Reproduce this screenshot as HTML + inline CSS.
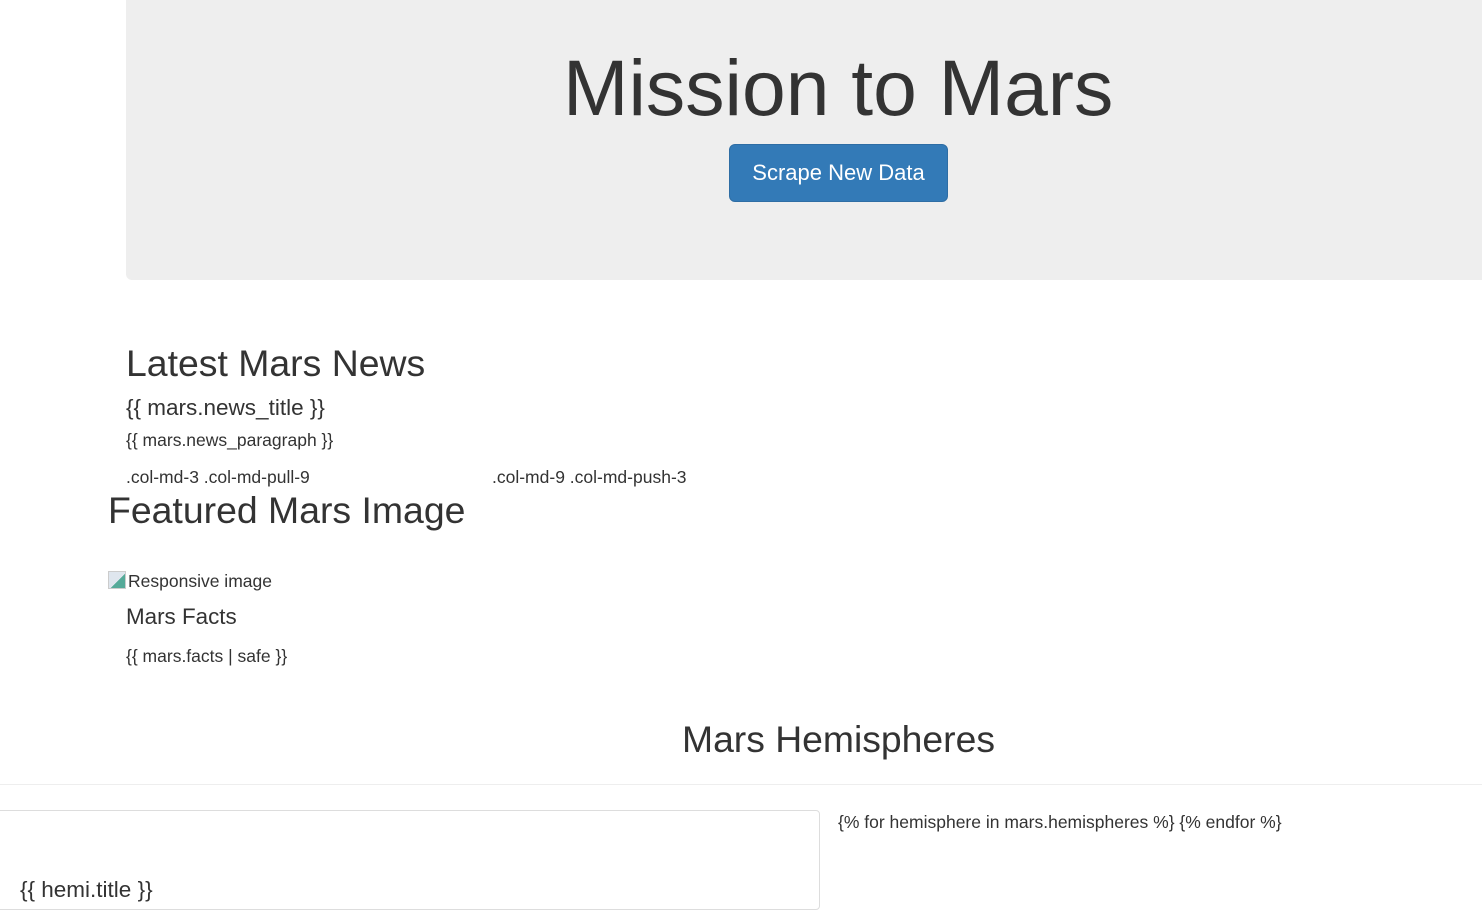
<!DOCTYPE html>
<html><head><style>
body{margin:0;width:1482px;height:886px;overflow:hidden;background:#fff;font-family:"Liberation Sans",sans-serif;color:#333;position:relative}
.a{position:absolute;white-space:nowrap}
</style></head><body>
<div class="a" style="left:126px;top:0;width:1356px;height:280px;background:#eee;border-bottom-left-radius:6px"></div>
<div class="a" style="left:563px;top:40px;font-size:78.6px;line-height:96px">Mission to Mars</div>
<div class="a" style="left:729px;top:144px;width:219px;height:58px;background:#337ab7;border:1px solid #2e6da4;box-sizing:border-box;border-radius:6px;color:#fff;font-size:22px;line-height:56px;text-align:center">Scrape New Data</div>
<div class="a" style="left:126px;top:340px;font-size:37.4px;line-height:46px">Latest Mars News</div>
<div class="a" style="left:126px;top:394px;font-size:22.5px;line-height:28px">{{ mars.news_title }}</div>
<div class="a" style="left:126px;top:430px;font-size:17.5px;line-height:20px">{{ mars.news_paragraph }}</div>
<div class="a" style="left:126px;top:467px;font-size:17.5px;line-height:20px">.col-md-3 .col-md-pull-9</div>
<div class="a" style="left:492px;top:467px;font-size:17.5px;line-height:20px">.col-md-9 .col-md-push-3</div>
<div class="a" style="left:108px;top:487px;font-size:37.4px;line-height:46px">Featured Mars Image</div>
<div class="a" style="left:108px;top:571px;width:18px;height:18px;background:linear-gradient(135deg,#dfe6ee 55%,#5a9 56%);border:1px solid #ccc;box-sizing:border-box"></div>
<div class="a" style="left:128px;top:571px;font-size:17.5px;line-height:20px">Responsive image</div>
<div class="a" style="left:126px;top:603px;font-size:22.4px;line-height:28px">Mars Facts</div>
<div class="a" style="left:126px;top:646px;font-size:17.5px;line-height:20px">{{ mars.facts | safe }}</div>
<div class="a" style="left:682px;top:716px;font-size:37.3px;line-height:46px">Mars Hemispheres</div>
<div class="a" style="left:0;top:784px;width:1482px;height:1px;background:#eee"></div>
<div class="a" style="left:-5px;top:810px;width:825px;height:100px;border:1px solid #ddd;border-radius:4px;box-sizing:border-box"></div>
<div class="a" style="left:20px;top:876px;font-size:22.5px;line-height:28px">{{ hemi.title }}</div>
<div class="a" style="left:838px;top:812px;font-size:17.5px;line-height:20px">{% for hemisphere in mars.hemispheres %} {% endfor %}</div>
</body></html>
